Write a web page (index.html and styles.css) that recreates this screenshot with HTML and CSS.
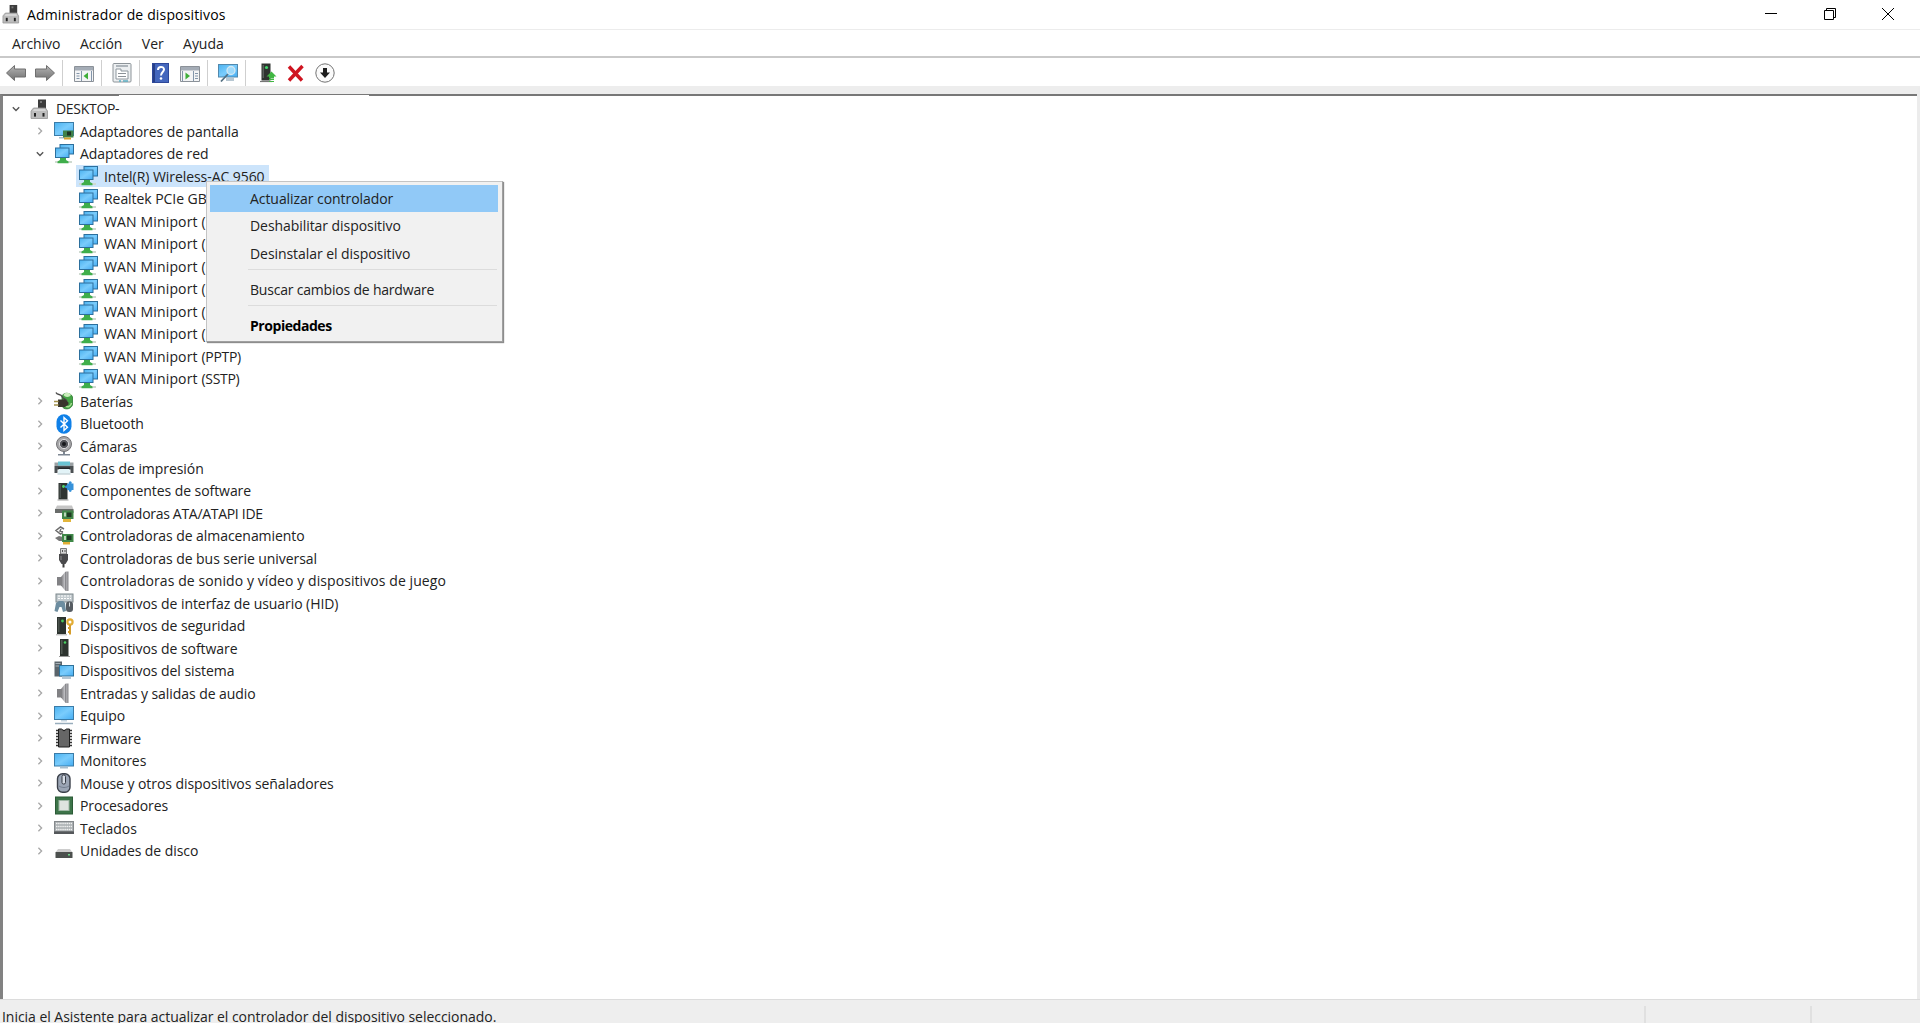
FILE: index.html
```html
<!DOCTYPE html>
<html lang="es">
  <head>
    <meta charset="UTF-8" />
    <meta name="viewport" content="width=device-width, initial-scale=1.0" />
    <title>Administrador de dispositivos</title>
    <link rel="stylesheet" href="styles.css">
  </head>
  <body>
    <!-- icon sprite -->
    <svg class="sprite" aria-hidden="true">
      <defs>
        <linearGradient id="screen" x1="0" y1="0" x2="1" y2="1">
          <stop offset="0" stop-color="#4ab2f0" />
          <stop offset="0.5" stop-color="#7accfc" />
          <stop offset="1" stop-color="#45adf3" />
        </linearGradient>
        <linearGradient id="metal" x1="0" y1="0" x2="0" y2="1">
          <stop offset="0" stop-color="#b5b5b5" />
          <stop offset="1" stop-color="#707070" />
        </linearGradient>
        <linearGradient id="cone" x1="0" y1="0" x2="1" y2="0">
          <stop offset="0" stop-color="#77777a" />
          <stop offset="0.5" stop-color="#c0c0c4" />
          <stop offset="1" stop-color="#88888c" />
        </linearGradient>

        <symbol id="open" viewBox="0 0 10 10">
          <path d="M1.8 3.2 5 6.4 8.2 3.2" fill="none" stroke="#555" stroke-width="1.4" />
        </symbol>
        <symbol id="closed" viewBox="0 0 10 10">
          <path d="M3.4 1.8 6.6 5 3.4 8.2" fill="none" stroke="#a8a8a8" stroke-width="1.3" />
        </symbol>

        <symbol id="computer" viewBox="0 0 20 20">
          <rect x="8" y="0.5" width="8" height="10" fill="#3d3d3d" />
          <rect x="10" y="2" width="2" height="2" fill="#777" />
          <path d="M3.5 9h12l2 3v7.5h-16.500V12z" fill="#bcbcbc" stroke="#959595" stroke-width="0.8" />
          <path d="M4 10h11l1 2H3z" fill="#d5d5d5" />
          <rect x="4" y="14" width="2" height="3.600" fill="#222" />
          <rect x="12.500" y="14" width="2" height="3.600" fill="#222" />
        </symbol>
        <symbol id="display" viewBox="0 0 20 20">
          <rect x="0.500" y="1.500" width="19" height="13" fill="url(#screen)" stroke="#3a7ca8" />
          <path d="M5 16h6v1.500H5z" fill="#a9bdcb" />
          <rect x="9" y="9.500" width="10.500" height="7" fill="#3f8148" />
          <rect x="13" y="10.500" width="4" height="4" fill="#1e3323" />
          <path d="M10 16.500h7v2h-7z" fill="#d3a32f" />
        </symbol>
        <symbol id="net" viewBox="0 0 20 20">
          <path d="M1 18h17" stroke="#cfdad0" stroke-width="2" />
          <rect x="6" y="0.500" width="13.500" height="9.500" fill="url(#screen)" stroke="#2c6f9d" />
          <rect x="1.500" y="4" width="13.500" height="9.500" fill="url(#screen)" stroke="#2c6f9d" />
          <path d="M6 14h6v2l2.500 1.500v1.800h-11V17.500L6 16z" fill="#3fae4b" />
        </symbol>
        <symbol id="battery" viewBox="0 0 20 20">
          <path d="M8 6c0-5 9-5 10.500 0v8c-2 5-9 5-10.500 1z" fill="#45a345" stroke="#2b7a2e" stroke-width="0.800" />
          <path d="M9.500 4c1-3 6-3 7.500 0-1.500 2.500-6 2.500-7.500 0z" fill="#c9edbb" />
          <path d="M11 15c3 2 6 0 6.500-3" fill="none" stroke="#a7dd91" stroke-width="1.500" />
          <path d="M2 1.500c1 3 5 1 6 4s4 2 5 5" fill="none" stroke="#4a4a4a" stroke-width="1.400" />
          <path d="M4 8.500h7l3.500 3v2L11 16H4z" fill="#38352c" />
          <path d="M0 10.500h4.500M0 14h4.500" stroke="#a3914b" stroke-width="1.500" />
        </symbol>
        <symbol id="bluetooth" viewBox="0 0 20 20">
          <rect x="2.500" y="0.300" width="15" height="19.400" rx="7.500" fill="#0f80e8" />
          <path d="m6.500 6.500 7 6.800-3.500 3.200V3.500l3.500 3.200-7 6.800" fill="none" stroke="#fff" stroke-width="1.400" />
        </symbol>
        <symbol id="camera" viewBox="0 0 20 20">
          <path d="M9 15h2v3h5v1.500H4V18h5z" fill="#7e8793" />
          <circle cx="10" cy="8" r="7.500" fill="#a6a6a8" stroke="#747477" />
          <circle cx="10" cy="8" r="4.600" fill="#55565b" stroke="#dedee0" />
          <circle cx="10" cy="8" r="2" fill="#17181c" />
        </symbol>
        <symbol id="printer" viewBox="0 0 20 20">
          <path d="M4 3.500h12V8H4z" fill="#69c3d2" />
          <path d="M0.500 4.500H4v3h12v-3h3.500V8h-19z" fill="#9ba1a4" />
          <path d="M0.500 8h19v7h-3v-3.500h-13V15h-3z" fill="#4b5053" />
          <path d="M4 9.500h12V11H4z" fill="#232729" />
          <path d="M5 11h10l1.500 4.500h-13z" fill="#e2f3f7" />
          <path d="M3.500 16h13" stroke="#9db4bb" stroke-width="0.800" />
        </symbol>
        <symbol id="component" viewBox="0 0 20 20">
          <rect x="4.500" y="2" width="9" height="16.500" fill="#2f3431" />
          <rect x="5.500" y="3" width="1.500" height="14" fill="#4b5350" />
          <circle cx="9.500" cy="5.500" r="1.400" fill="#53d96b" />
          <path d="M3.500 19h11" stroke="#9d9d9d" />
          <path d="M13 2.500h6.500v6.500H13z" fill="#3692da" />
          <circle cx="16.200" cy="1.800" r="1.500" fill="#3692da" />
          <circle cx="16.200" cy="9.500" r="1.400" fill="#3692da" />
          <circle cx="12.500" cy="5.800" r="1.500" fill="#3692da" />
        </symbol>
        <symbol id="ata" viewBox="0 0 20 20">
          <path d="M3 2.500h15l1.500 4H1z" fill="#c5c5c5" />
          <path d="M1 6h18.500v4H1z" fill="#696c6a" />
          <rect x="8" y="7.500" width="11.500" height="8.500" fill="#428549" />
          <path d="M10 9.500h2v4h-2z" fill="#b9d6b8" />
          <rect x="13" y="9.500" width="4.500" height="4.500" fill="#203c25" />
          <path d="M9 16h8v3H9z" fill="#e2b53b" />
        </symbol>
        <symbol id="storage" viewBox="0 0 20 20">
          <path d="M10 3 6.500 1 2 4.500 6.500 8 9 6.500M7 3l-1 2 3 1" fill="none" stroke="#6c6c6c" stroke-width="1.500" />
          <path d="m1 12 4-2 4 1v4H5z" fill="#777" />
          <rect x="8" y="8" width="11.500" height="8" fill="#3f8848" />
          <path d="M10 10h2v4h-2z" fill="#b9d6b8" />
          <rect x="13" y="9.500" width="4.500" height="4.500" fill="#1e3b25" />
          <path d="M9 16h7v2.500H9z" fill="#e0ae35" />
        </symbol>
        <symbol id="usb" viewBox="0 0 20 20">
          <path d="M6.500 0.500h6V6h-6z" fill="#d5d5d5" stroke="#797979" />
          <path d="M8 2h1v2H8zm2.500 0h1v2h-1z" fill="#555" />
          <path d="M5 6h9v6l-2.500 4h-4L5 12z" fill="#4a4a4c" />
          <path d="M8.500 16h2v3.500h-2z" fill="#3d3d3d" />
          <path d="M7 8v4" stroke="#8e8e90" />
        </symbol>
        <symbol id="sound" viewBox="0 0 20 20">
          <path d="M3 6h4v8.500H3z" fill="#818184" />
          <path d="M7 6 11.500 0.500h3v19.500h-3L7 14.500z" fill="url(#cone)" />
          <path d="M11.500 1v18.500" stroke="#8a8a8e" />
        </symbol>
        <symbol id="hid" viewBox="0 0 20 20">
          <rect x="2" y="1" width="17" height="8" fill="#c3cbcf" stroke="#7d878c" />
          <path d="M4 3h13M4 5.500h13" stroke="#fff" stroke-dasharray="2 1" />
          <path d="M0.500 18 2 10l3-2h4l2 2 1 8-3 1-1.500-5h-2l-2 5z" fill="#6d8da0" />
          <rect x="12" y="8.500" width="7" height="10.500" rx="3" fill="#565c62" />
          <path d="M15.500 9.500v4" stroke="#d5dde1" />
        </symbol>
        <symbol id="security" viewBox="0 0 20 20">
          <rect x="3" y="1" width="9" height="17" fill="#2d332f" />
          <rect x="4" y="2" width="1.500" height="14" fill="#4b534d" />
          <circle cx="8.500" cy="5" r="1.400" fill="#46c85a" />
          <path d="M2 18.800h11" stroke="#a9a9a9" />
          <circle cx="16" cy="6" r="2.600" fill="none" stroke="#e3ad35" stroke-width="2.200" />
          <path d="M16 9v9.500M16 12h-2M16 16h-2" stroke="#d59d2c" stroke-width="2" />
        </symbol>
        <symbol id="software" viewBox="0 0 20 20">
          <rect x="6" y="1" width="8.500" height="17" fill="#2d332f" />
          <rect x="7" y="2" width="1.500" height="14" fill="#505852" />
          <circle cx="11" cy="4.500" r="1.300" fill="#49cf60" />
          <path d="M5 18.500h11" stroke="#9a9a9a" />
        </symbol>
        <symbol id="system" viewBox="0 0 20 20">
          <rect x="0.500" y="0.500" width="7.500" height="15" fill="#5a646b" />
          <path d="M1.500 2.500h5M1.500 5h5" stroke="#a6b1b7" />
          <rect x="5.500" y="4.500" width="14" height="10.500" fill="url(#screen)" stroke="#2e7199" />
          <path d="M8 17h9" stroke="#96aebf" stroke-width="1.400" />
        </symbol>
        <symbol id="pc" viewBox="0 0 20 20">
          <rect x="0.500" y="0.500" width="19" height="13" fill="url(#screen)" stroke="#3b7ca8" />
          <path d="M7 14h6v1.500H7z" fill="#c3d3de" />
          <path d="M1 17.500h18" stroke="#98adbc" stroke-width="1.500" />
        </symbol>
        <symbol id="chip" viewBox="0 0 20 20">
          <path d="M2 2.500h16M2 5.500h16M2 8.500h16M2 11.500h16M2 14.500h16M2 17.500h16" stroke="#333" stroke-width="1.500" />
          <path d="M4.500 1h3l2.500 2 2.500-2h3v18h-11z" fill="#666" stroke="#1f1f1f" />
        </symbol>
        <symbol id="monitor" viewBox="0 0 20 20">
          <rect x="0.500" y="2.500" width="19" height="12.500" fill="url(#screen)" stroke="#3b7ca8" />
          <path d="M6 16h8v1.500H6z" fill="#a9becd" />
        </symbol>
        <symbol id="mouse" viewBox="0 0 20 20">
          <rect x="3.500" y="0.700" width="12.500" height="18.600" rx="5" fill="#9ba5b5" stroke="#3b404a" stroke-width="1.400" />
          <rect x="8" y="2" width="3.500" height="9" rx="1.500" fill="#d7dde7" stroke="#353a43" />
          <path d="M5 13c3 2 7 2 10 0" fill="none" stroke="#747f90" />
        </symbol>
        <symbol id="cpu" viewBox="0 0 20 20">
          <rect x="1.500" y="1" width="17" height="17" fill="#3d7449" stroke="#2b5a36" />
          <rect x="5" y="4.500" width="10" height="10" fill="#dfe4df" stroke="#9fb7a5" />
        </symbol>
        <symbol id="keyboard" viewBox="0 0 20 20">
          <rect x="0.500" y="3.500" width="19" height="10" fill="#a9aeb1" stroke="#85898c" />
          <path d="M2 5.500h16M2 8.500h16M2 11.500h16" stroke="#f0f0f0" stroke-width="1.500" stroke-dasharray="1.500 0.600" />
          <path d="M0 13.500h20V16H0z" fill="#55585b" />
        </symbol>
        <symbol id="disk" viewBox="0 0 20 20">
          <path d="M4 8h12l2.500 3.500H1.500z" fill="#cdcdcd" />
          <rect x="1.500" y="11" width="17" height="6" rx="0.500" fill="#4c504e" />
          <rect x="14" y="13" width="2" height="1.500" fill="#73d98b" />
        </symbol>
      </defs>
    </svg>

    <div class="window">
      <header class="titlebar">
        <svg class="titlebar__icon"><use href="#computer" /></svg>
        <h1 class="titlebar__text">Administrador de dispositivos</h1>
        <div class="controls">
          <svg viewBox="0 0 14 14"><path d="M1 6.500h12" /></svg>
          <svg viewBox="0 0 14 14"><path d="M1.500 3.500h9v9h-9zM3.500 3.500v-2h9v9h-2" /></svg>
          <svg viewBox="0 0 14 14"><path d="m1 1 12 12M13 1 1 13" /></svg>
        </div>
      </header>

      <nav class="menubar">
        <span>Archivo</span>
        <span>Acción</span>
        <span>Ver</span>
        <span>Ayuda</span>
      </nav>

      <div class="toolbar">
        <svg class="tool" viewBox="0 0 20 20"><path d="M0.500 10 8.500 2.500V6H19.500v8H8.500v3.500z" fill="url(#metal)" stroke="#6f6f6f" /></svg>
        <svg class="tool tool--next" viewBox="0 0 20 20"><path d="M19.500 10 11.500 2.500V6H0.500v8h11v3.500z" fill="url(#metal)" stroke="#6f6f6f" /></svg>
        <i class="divider"></i>
        <svg class="tool" viewBox="0 0 20 20">
          <path d="M0.500 3.500h19v15h-19z" fill="#f3f4f5" stroke="#8b9198" />
          <path d="M1 4h18v3.500H1z" fill="#a4acb6" />
          <path d="M7.500 8v10M2.500 10.500h3M2.500 13h3M2.500 15.500h3M17.500 8v10" stroke="#8295aa" />
          <path d="M14 9.500v7L9.500 13z" fill="#3fae39" />
        </svg>
        <i class="divider"></i>
        <svg class="tool tool--props" viewBox="0 0 20 20">
          <rect x="1" y="0.500" width="18" height="18.500" rx="1" fill="#eceff1" stroke="#8d9499" />
          <path d="M4 3h12" stroke="#9aa2a8" stroke-width="1.500" />
          <path d="M4 6h5v2h7v8H4z" fill="#fff" stroke="#8e979e" />
          <path d="M6 10.500h8M6 13.500h8" stroke="#8c9298" />
          <path d="M7 18h2M11 18h5" stroke="#5cafc2" stroke-width="1.500" />
        </svg>
        <i class="divider"></i>
        <svg class="tool tool--help" viewBox="0 0 20 20">
          <rect x="2.500" y="0.500" width="16" height="19" fill="#4467bd" stroke="#2e489a" />
          <path d="M4 1v18" stroke="#273f88" stroke-width="2" />
          <path d="M8 7c0-4 6-4 6-0.500 0 2.500-3 2.500-3 6" fill="none" stroke="#fff" stroke-width="2" />
          <circle cx="11" cy="15.500" r="1.300" fill="#fff" />
        </svg>
        <svg class="tool tool--run" viewBox="0 0 20 20">
          <path d="M0.500 3.500h19v15h-19z" fill="#f3f4f5" stroke="#8b9198" />
          <path d="M1 4h18v3.500H1z" fill="#a4acb6" />
          <path d="M2.500 8v10M13.500 8v10M15 10.500h3M15 13h3M15 15.500h3" stroke="#8295aa" />
          <path d="M5.500 9.500v7L10 13z" fill="#3fae39" />
        </svg>
        <i class="divider divider--near"></i>
        <svg class="tool" viewBox="0 0 20 20">
          <rect x="0.500" y="1.500" width="19" height="12.500" fill="url(#screen)" stroke="#5289ad" />
          <path d="M8 15h8v3H8z" fill="#b7c7d2" />
          <path d="M3 18.500 10 11" stroke="#536f82" stroke-width="1.800" />
          <circle cx="13" cy="7.500" r="4" fill="#9edafb" stroke="#d3e8f3" stroke-width="1.300" />
        </svg>
        <i class="divider"></i>
        <svg class="tool" viewBox="0 0 20 20">
          <rect x="4.500" y="0.500" width="9" height="17" fill="#2e332f" />
          <rect x="5.500" y="2" width="1.500" height="13" fill="#59605b" />
          <circle cx="9.500" cy="4.500" r="1.600" fill="#42d66d" />
          <path d="M3 18.500h12" stroke="#777" stroke-width="1.200" />
          <path d="m14.500 8.500 5 5h-2.500v2h-5v-2H9.500z" fill="#41b743" />
          <path d="M12 16.500h5M12 18.500h5" stroke="#41b743" />
        </svg>
        <svg class="tool tool--next" viewBox="0 0 20 20"><path d="m3 3.500 13 14M16.500 3 3 17.500" stroke="#cf1420" stroke-width="3.400" /></svg>
        <svg class="tool tool--next" viewBox="0 0 20 20">
          <circle cx="10" cy="10" r="9.200" fill="#fafafa" stroke="#737373" />
          <path d="M8 5h4v4.500h3L10 15l-5-5.500h3z" fill="#1c1c1c" />
        </svg>
      </div>

      <main class="panel">
        <div class="tree">
          <div class="node node--root"><svg class="arrow"><use href="#open" /></svg><svg class="icon"><use href="#computer" /></svg><span class="host">DESKTOP-</span></div>
          <div class="node"><svg class="arrow"><use href="#closed" /></svg><svg class="icon"><use href="#display" /></svg><span>Adaptadores de pantalla</span></div>
          <div class="node"><svg class="arrow"><use href="#open" /></svg><svg class="icon"><use href="#net" /></svg><span>Adaptadores de red</span></div>
          <div class="node node--child">
            <div class="node__hit"><svg class="icon"><use href="#net" /></svg><span>Intel(R) Wireless-AC 9560</span></div>
            <div class="context">
              <div class="context__item context__item--active">Actualizar controlador</div>
              <div class="context__item">Deshabilitar dispositivo</div>
              <div class="context__item">Desinstalar el dispositivo</div>
              <hr class="context__line">
              <div class="context__item context__item--scan">Buscar cambios de hardware</div>
              <hr class="context__line">
              <div class="context__item context__item--bold">Propiedades</div>
            </div>
          </div>
          <div class="node node--child"><svg class="icon"><use href="#net" /></svg><span>Realtek PCIe GB</span></div>
          <div class="node node--child node--wan"><svg class="icon"><use href="#net" /></svg><span>WAN Miniport (</span></div>
          <div class="node node--child node--wan"><svg class="icon"><use href="#net" /></svg><span>WAN Miniport (</span></div>
          <div class="node node--child node--wan"><svg class="icon"><use href="#net" /></svg><span>WAN Miniport (</span></div>
          <div class="node node--child node--wan"><svg class="icon"><use href="#net" /></svg><span>WAN Miniport (</span></div>
          <div class="node node--child node--wan"><svg class="icon"><use href="#net" /></svg><span>WAN Miniport (</span></div>
          <div class="node node--child node--wan"><svg class="icon"><use href="#net" /></svg><span>WAN Miniport (</span></div>
          <div class="node node--child node--wan"><svg class="icon"><use href="#net" /></svg><span>WAN Miniport <small>(PPTP)</small></span></div>
          <div class="node node--child node--wan"><svg class="icon"><use href="#net" /></svg><span>WAN Miniport <small>(SSTP)</small></span></div>
          <div class="node"><svg class="arrow"><use href="#closed" /></svg><svg class="icon"><use href="#battery" /></svg><span>Baterías</span></div>
          <div class="node"><svg class="arrow"><use href="#closed" /></svg><svg class="icon"><use href="#bluetooth" /></svg><span>Bluetooth</span></div>
          <div class="node"><svg class="arrow"><use href="#closed" /></svg><svg class="icon"><use href="#camera" /></svg><span>Cámaras</span></div>
          <div class="node"><svg class="arrow"><use href="#closed" /></svg><svg class="icon"><use href="#printer" /></svg><span>Colas de impresión</span></div>
          <div class="node"><svg class="arrow"><use href="#closed" /></svg><svg class="icon"><use href="#component" /></svg><span>Componentes de software</span></div>
          <div class="node node--narrow"><svg class="arrow"><use href="#closed" /></svg><svg class="icon"><use href="#ata" /></svg><span>Controladoras ATA/ATAPI IDE</span></div>
          <div class="node"><svg class="arrow"><use href="#closed" /></svg><svg class="icon"><use href="#storage" /></svg><span>Controladoras de almacenamiento</span></div>
          <div class="node"><svg class="arrow"><use href="#closed" /></svg><svg class="icon"><use href="#usb" /></svg><span>Controladoras de bus serie universal</span></div>
          <div class="node node--wide"><svg class="arrow"><use href="#closed" /></svg><svg class="icon"><use href="#sound" /></svg><span>Controladoras de sonido y vídeo y dispositivos de juego</span></div>
          <div class="node"><svg class="arrow"><use href="#closed" /></svg><svg class="icon"><use href="#hid" /></svg><span>Dispositivos de interfaz de usuario (HID)</span></div>
          <div class="node"><svg class="arrow"><use href="#closed" /></svg><svg class="icon"><use href="#security" /></svg><span>Dispositivos de seguridad</span></div>
          <div class="node"><svg class="arrow"><use href="#closed" /></svg><svg class="icon"><use href="#software" /></svg><span>Dispositivos de software</span></div>
          <div class="node"><svg class="arrow"><use href="#closed" /></svg><svg class="icon"><use href="#system" /></svg><span>Dispositivos del sistema</span></div>
          <div class="node"><svg class="arrow"><use href="#closed" /></svg><svg class="icon"><use href="#sound" /></svg><span>Entradas y salidas de audio</span></div>
          <div class="node"><svg class="arrow"><use href="#closed" /></svg><svg class="icon"><use href="#pc" /></svg><span>Equipo</span></div>
          <div class="node"><svg class="arrow"><use href="#closed" /></svg><svg class="icon"><use href="#chip" /></svg><span>Firmware</span></div>
          <div class="node"><svg class="arrow"><use href="#closed" /></svg><svg class="icon"><use href="#monitor" /></svg><span>Monitores</span></div>
          <div class="node"><svg class="arrow"><use href="#closed" /></svg><svg class="icon"><use href="#mouse" /></svg><span>Mouse y otros dispositivos señaladores</span></div>
          <div class="node"><svg class="arrow"><use href="#closed" /></svg><svg class="icon"><use href="#cpu" /></svg><span>Procesadores</span></div>
          <div class="node"><svg class="arrow"><use href="#closed" /></svg><svg class="icon"><use href="#keyboard" /></svg><span>Teclados</span></div>
          <div class="node"><svg class="arrow"><use href="#closed" /></svg><svg class="icon"><use href="#disk" /></svg><span>Unidades de disco</span></div>
        </div>
      </main>

      <footer class="status">
        <span class="status__text">Inicia el Asistente para actualizar el controlador del dispositivo seleccionado.</span>
        <span class="status__cell"></span>
        <span class="status__cell status__cell--last"></span>
      </footer>
    </div>
  </body>
</html>
```

FILE: styles.css
```css
* {
  box-sizing: border-box;
}

body {
  margin: 0;
  overflow: hidden;
  background: #fff;
  color: #222;
  font-family: "Open Sans", "Noto Sans", sans-serif;
  font-size: 14px;
  letter-spacing: -0.06px;
  white-space: nowrap;
}

svg {
  display: block;
  flex: none;
}

.sprite {
  position: absolute;
  width: 0;
  height: 0;
}

.window {
  display: flex;
  flex-direction: column;
  height: 100vh;
}

/* title bar */
.titlebar {
  display: flex;
  align-items: center;
  height: 30px;
  padding: 0 25px 1px 2px;
  border-bottom: 1px solid #ececec;
}

.titlebar__icon {
  width: 19px;
  height: 20px;
}

.titlebar__text {
  flex: 1;
  margin: 1px 0 0 6px;
  font-size: 14px;
  font-weight: 400;
  letter-spacing: 0.15px;
  color: #000;
}

.controls {
  display: flex;
  gap: 44.5px;
}

.controls svg {
  width: 14px;
  height: 14px;
  fill: none;
  stroke: #000;
}

/* menu bar */
.menubar {
  display: flex;
  align-items: center;
  gap: 19.5px;
  height: 28px;
  padding-left: 12px;
  border-bottom: 2px solid #c9c9c9;
}

/* toolbar */
.toolbar {
  display: flex;
  align-items: center;
  height: 28px;
  padding: 2px 0 0 6px;
}

.tool {
  width: 20px;
  height: 20px;
}

.tool--next {
  margin-left: 9px;
}

.tool--props {
  margin-left: -1px;
}

.tool--help {
  margin-left: -1px;
}

.tool--run {
  margin-left: 10px;
}

.divider {
  width: 1px;
  height: 26px;
  margin: 0 11px 0 7px;
  background: #cfcfcf;
}

.divider--near {
  margin-right: 10px;
}

/* device tree */
.panel {
  flex: 1;
  min-height: 0;
  border-top: 8px solid #ededed;
  border-right: 3px solid #ececec;
}

.tree {
  height: 100%;
  padding-top: 1.5px;
  border-top: 2px solid #777;
  border-left: 3px solid #828282;
}

.node {
  position: relative;
  display: flex;
  align-items: center;
  height: 22.49px;
  padding-left: 32px;
}

.node--root {
  padding-left: 8px;
  letter-spacing: -0.3px;
}

.node--child {
  padding-left: 75px;
}

.node--wan {
  letter-spacing: 0.15px;
}

.node--wan small {
  font-size: 14px;
  letter-spacing: -0.3px;
}

.node--wide {
  letter-spacing: 0.08px;
}

.node--narrow {
  letter-spacing: -0.3px;
}

.arrow {
  width: 10px;
  height: 10px;
  margin-right: 9px;
}

.icon {
  width: 20px;
  height: 20px;
  margin-right: 6px;
}

.host::after {
  content: "";
  position: absolute;
  top: -2.5px;
  left: 116px;
  width: 250px;
  height: 4px;
  background: #fff;
}

.node__hit {
  display: flex;
  align-items: center;
  height: 100%;
  margin-left: -2px;
  padding: 0 4px 0 2px;
  background: #cce4fb;
}

/* context menu */
.context {
  position: absolute;
  z-index: 1;
  top: 16px;
  left: 203px;
  width: 297px;
  padding: 3px 4px 2px 3px;
  border: 1px solid #c4c4c4;
  border-right-color: #a0a0a0;
  border-bottom-color: #a0a0a0;
  background: #f1f1f1;
  box-shadow: 1px 1px 1px #8d8d8d;
}

.context__item {
  height: 27.5px;
  padding-left: 40px;
  line-height: 28px;
}

.context__item--active {
  background: #91c9f7;
}

.context__item--scan {
  letter-spacing: -0.2px;
}

.context__item--bold {
  font-weight: 700;
  color: #000;
  letter-spacing: -0.45px;
}

.context__line {
  height: 1px;
  margin: 2px 1px 5.5px 38px;
  border: 0;
  background: #dcdcdc;
}

/* status bar */
.status {
  display: flex;
  height: 24px;
  border-top: 1px solid #dcdcdc;
  background: #eee;
}

.status__text {
  flex: 1;
  padding: 7px 0 0 2px;
  line-height: 20px;
  letter-spacing: -0.04px;
}

.status__cell {
  width: 166px;
  margin-top: 6px;
  border-left: 2px solid #e0e0e0;
}

.status__cell--last {
  width: 110px;
}
```
